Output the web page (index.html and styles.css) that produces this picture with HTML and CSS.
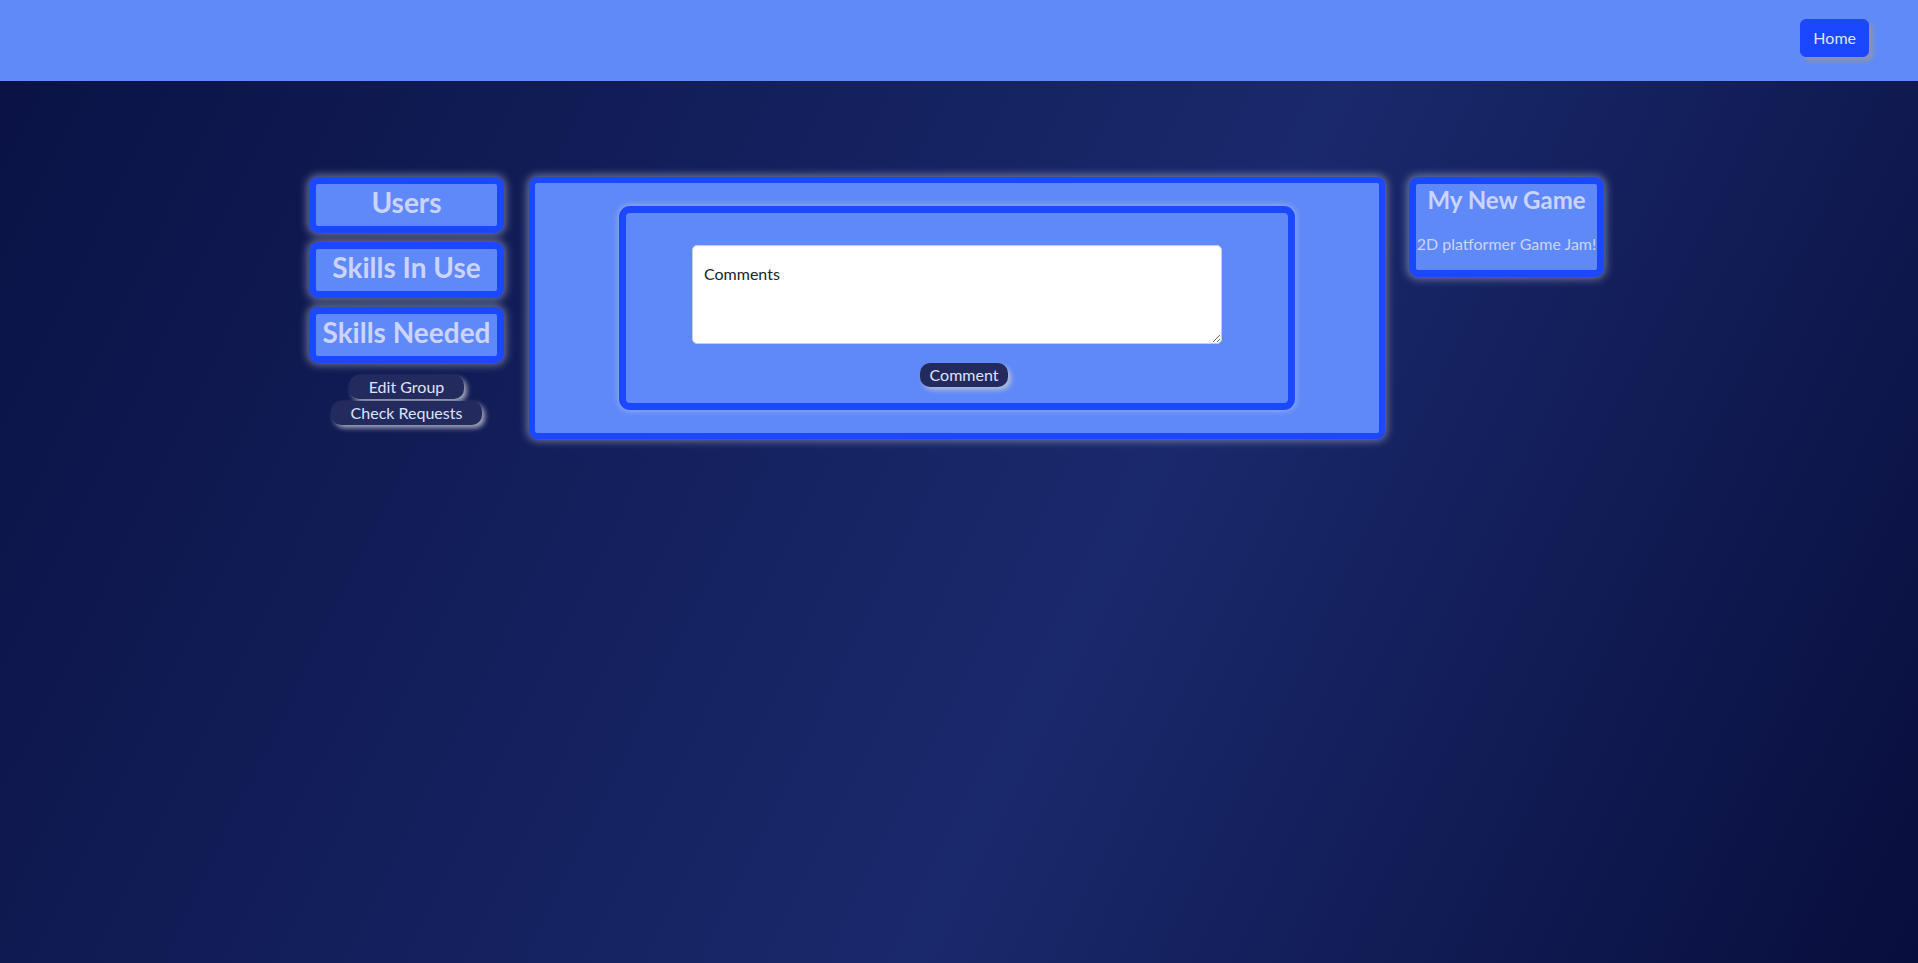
FILE: index.html
```html
<!DOCTYPE html>
<html lang="en">
<head>
<meta charset="utf-8">
<title>My New Game</title>
<link rel="stylesheet" href="styles.css">
</head>
<body>
<header class="topbar">
  <button class="home-btn">Home</button>
</header>
<main class="layout">
  <aside class="side">
    <div class="panel"><h3 class="panel-title">Users</h3></div>
    <div class="panel"><h3 class="panel-title">Skills In Use</h3></div>
    <div class="panel"><h3 class="panel-title">Skills Needed</h3></div>
    <div class="side-actions">
      <button class="pill">Edit Group</button>
      <button class="pill">Check Requests</button>
    </div>
  </aside>
  <section class="board">
    <div class="comment-card">
      <textarea class="comment-input">Comments</textarea>
      <button class="pill comment-btn">Comment</button>
    </div>
  </section>
  <aside class="info">
    <div class="panel info-panel">
      <h4 class="info-title">My New Game</h4>
      <p class="info-text">2D platformer Game Jam!</p>
    </div>
  </aside>
</main>
</body>
</html>
```
FILE: styles.css
```css
* { box-sizing: border-box; }

html, body { margin: 0; padding: 0; }

body {
  min-height: 963px;
  font-family: "Lato", "Open Sans", "Liberation Sans", sans-serif;
  font-size: 16px;
  line-height: 24px;
  background: linear-gradient(116deg, #0a1244 0%, #1a296c 58%, #080e3c 100%);
  color: #cdd3ff;
}

.topbar {
  height: 81px;
  background: #5f8af8;
  display: flex;
  justify-content: flex-end;
  align-items: flex-start;
  padding: 19px 49px 0 0;
}

.home-btn {
  height: 38px;
  padding: 6px 12px;
  border: 1px solid #1a47ff;
  border-radius: 6px;
  background: #1a47ff;
  color: #dfe3ff;
  font: inherit;
  font-size: 16px;
  line-height: 24px;
  box-shadow: 4px 4px 5px rgba(150, 150, 160, 0.85);
  cursor: pointer;
}

.layout {
  display: flex;
  justify-content: center;
  align-items: flex-start;
  padding: 96px 5px 0 0;
}

.side {
  width: 195px;
  display: flex;
  flex-direction: column;
  gap: 9px;
}

.board { margin: 0 24px 0 25px; }

.panel {
  width: 195px;
  border: 7px solid #1a47ff;
  border-radius: 9px;
  background: #5f89f8;
  box-shadow: 0 0 8px 2px rgba(225, 225, 240, 0.45);
}

.panel-title {
  margin: 0;
  padding-bottom: 6px;
  font-size: 28px;
  line-height: 36px;
  font-weight: 700;
  text-align: center;
  white-space: nowrap;
  color: #cdd3ff;
}

.side-actions {
  margin-top: 3px;
  display: flex;
  flex-direction: column;
  align-items: center;
  gap: 2px;
}

.pill {
  border: none;
  border-radius: 10px;
  background: #232a5e;
  color: #dde2ff;
  font: inherit;
  font-size: 16px;
  line-height: 24px;
  padding: 0 20px;
  box-shadow: 3px 3px 5px rgba(200, 200, 210, 0.8);
  cursor: pointer;
}

.board {
  width: 856px;
  border: 6px solid #1a47ff;
  border-radius: 8px;
  background: #5f89f8;
  padding: 23px 0;
  box-shadow: 0 0 8px 2px rgba(225, 225, 240, 0.45);
}

.comment-card {
  width: 676px;
  margin: 0 auto;
  border: 7px solid #1a47ff;
  border-radius: 11px;
  background: #5f89f8;
  padding: 32px 0 16px;
  display: flex;
  flex-direction: column;
  align-items: center;
  box-shadow: 0 0 6px 1px rgba(225, 225, 240, 0.4);
}

.comment-input {
  display: block;
  width: 530px;
  height: 99px;
  margin: 0;
  padding: 16px 11px;
  border: 1px solid #c9ced6;
  border-radius: 5px;
  background: #fff;
  color: #212529;
  font: inherit;
  font-size: 16px;
  line-height: 24px;
}

.comment-btn {
  margin: 19px 0 0 14px;
  padding: 0 10px;
}

.info-panel { padding: 0; }

.info-title {
  margin: 0;
  font-size: 24px;
  line-height: 32px;
  font-weight: 700;
  text-align: center;
  white-space: nowrap;
  color: #cdd3ff;
}

.info-text {
  margin: 16px 0 14px;
  text-align: center;
  white-space: nowrap;
  color: #cdd3ff;
}
```
